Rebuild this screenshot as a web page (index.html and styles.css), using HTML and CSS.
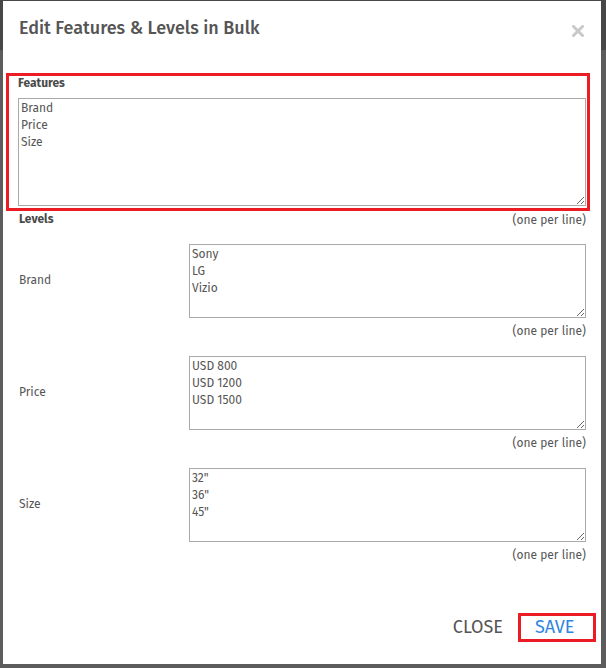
FILE: index.html
```html
<!DOCTYPE html>
<html>
<head>
<meta charset="utf-8">
<link rel="stylesheet" href="styles.css">
</head>
<body>
<div class="modal">
  <div class="modal-header">
    <h1 class="title">Edit Features &amp; Levels in Bulk</h1>
    <button class="x-btn" aria-label="Close">
      <svg width="12" height="12" viewBox="0 0 12 12"><path d="M1.5 1.5 L10.5 10.5 M10.5 1.5 L1.5 10.5" stroke="#c9c9c9" stroke-width="3" stroke-linecap="square"/></svg>
    </button>
  </div>
  <div class="modal-body">
    <div class="features-box">
      <div class="label-bold">Features</div>
      <textarea class="ta ta-features">Brand
Price
Size</textarea>
    </div>
    <div class="levels-head">
      <span class="label-bold">Levels</span>
      <span class="hint">(one per line)</span>
    </div>
    <div class="level-row">
      <div class="level-label">Brand</div>
      <div class="level-field">
        <textarea class="ta ta-level">Sony
LG
Vizio</textarea>
        <div class="hint hint-below">(one per line)</div>
      </div>
    </div>
    <div class="level-row">
      <div class="level-label">Price</div>
      <div class="level-field">
        <textarea class="ta ta-level">USD 800
USD 1200
USD 1500</textarea>
        <div class="hint hint-below">(one per line)</div>
      </div>
    </div>
    <div class="level-row">
      <div class="level-label">Size</div>
      <div class="level-field">
        <textarea class="ta ta-level">32"
36"
45"</textarea>
        <div class="hint hint-below">(one per line)</div>
      </div>
    </div>
  </div>
  <div class="modal-footer">
    <button class="btn btn-close">CLOSE</button>
    <button class="btn btn-save">SAVE</button>
  </div>
</div>
</body>
</html>
```
FILE: styles.css
```css
html, body {
  margin: 0;
  padding: 0;
}
body {
  width: 606px;
  height: 668px;
  overflow: hidden;
  background: linear-gradient(#474747 0, #474747 50px, #5c5c5c 50px);
  font-family: "Fira Sans", "Lato", "Noto Sans", sans-serif;
  color: #555;
}
.modal {
  margin: 1px 0 0 3px;
  width: 598px;
  height: 663px;
  background: #fff;
  box-sizing: border-box;
  display: flex;
  flex-direction: column;
}
.modal-header {
  height: 72px;
  display: flex;
  justify-content: space-between;
  align-items: flex-start;
  padding: 0 17px 0 16px;
  box-sizing: border-box;
}
.title {
  margin: 16px 0 0 0;
  font-size: 18px;
  line-height: 22px;
  font-weight: 500;
  color: #555;
  letter-spacing: 0;
}
.x-btn {
  margin-top: 24px;
  padding: 0;
  border: 0;
  background: none;
  width: 12px;
  height: 12px;
  display: block;
}
.x-btn svg { display: block; }
.modal-body {
  flex: 1;
}
.features-box {
  margin-left: 3px;
  width: 584px;
  height: 138px;
  box-sizing: border-box;
  border: 3px solid #ec1c24;
  padding: 0 0 0 9px;
}
.label-bold {
  font-size: 12px;
  line-height: 15px;
  font-weight: 700;
  color: #4a4a4a;
}
.ta {
  display: block;
  box-sizing: border-box;
  border: 1px solid #a9a9a9;
  border-radius: 0;
  padding: 1px 2px;
  margin: 0;
  font-family: "Fira Sans", "Lato", "Noto Sans", sans-serif;
  font-size: 12px;
  line-height: 17px;
  color: #555;
  background: #fff;
  resize: both;
  outline: none;
}
.ta-features {
  margin-top: 7px;
  width: 568px;
  height: 108px;
}
.levels-head {
  display: flex;
  justify-content: space-between;
  align-items: center;
  height: 15px;
  padding: 0 15px 0 16px;
  margin-top: 1px;
}
.hint {
  font-size: 12px;
  line-height: 16px;
  color: #555;
}
.level-row {
  display: flex;
  align-items: flex-start;
  padding: 0 15px 0 16px;
  margin-top: 17px;
}
.level-label {
  width: 170px;
  font-size: 12px;
  line-height: 16px;
  color: #555;
  margin-top: 28px;
}
.level-field {
  width: 397px;
}
.ta-level {
  width: 397px;
  height: 74px;
}
.hint-below {
  text-align: right;
  margin-top: 5px;
}
.modal-footer {
  display: flex;
  justify-content: flex-end;
  align-items: center;
  padding: 0 5px 22px 0;
}
.btn {
  font-family: "Fira Sans", "Lato", "Noto Sans", sans-serif;
  font-size: 18px;
  line-height: 23px;
  background: none;
  border: 3px solid transparent;
  padding: 0 14px;
  margin: 0;
  cursor: pointer;
}
.btn-close {
  color: #555;
  padding-right: 11px;
}
.btn-save {
  color: #2f86e0;
  border-color: #ec1c24;
  width: 78px;
  height: 29px;
  margin-left: 1px;
  text-align: left;
  padding: 0 0 0 14px;
}
```
